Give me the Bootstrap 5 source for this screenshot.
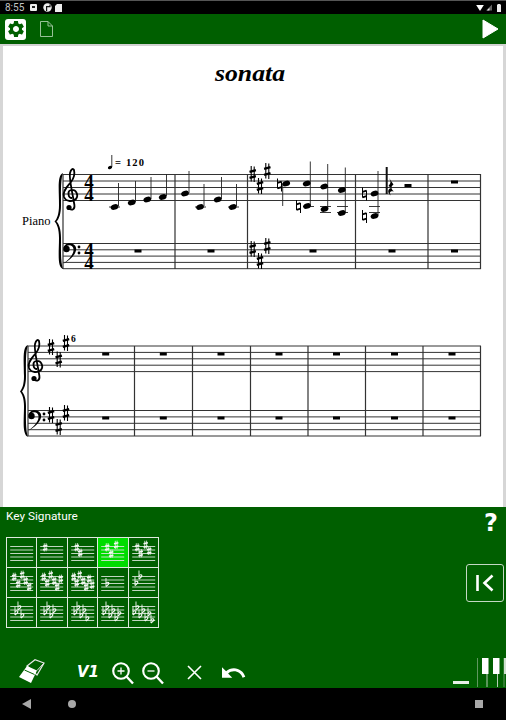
<!DOCTYPE html>
<html lang="en">
<head>
<meta charset="utf-8">
<title>Score editor</title>
<link href="https://cdn.jsdelivr.net/npm/bootstrap@5.3.0/dist/css/bootstrap.min.css" rel="stylesheet">
<style>
html,body{height:720px;overflow:hidden;margin:0;background:#d6d6d6;font-family:Roboto,"Liberation Sans",sans-serif}
.app-shell{width:506px;height:720px}
.sys-bar{height:14px;background:#000;border-top:1px solid #555;color:#c4c4c4;font-size:10px;line-height:13px;padding:0 5px}
.sb-a{margin-left:6px}
.sb-b{margin-left:6px}
.sb-c{margin-left:3px}
.sb-d{margin-left:2px}
.sb-e{margin-left:5px}
.doc-ico{margin-left:14px}
.top-tools{height:30px;background:#005f00;padding:0 7px 0 5px}
.gear-box{width:21px;height:21px;background:#fff;border-radius:3px}
.gray-gap{height:2px;background:#d2d2d2}
.sheet-wrap{height:461px;padding:0 3px;background:#d6d6d6}
.sheet{width:500px;height:461px;background:#fff}
.sheet text{font-family:"Liberation Serif",serif;fill:#000}
.tool-panel{height:181px;background:#005f00;color:#fff;padding:2px 2px 0 6px}
.panel-title{font-size:11.8px;line-height:15px;height:28px}
.key-grid{display:grid;grid-template-columns:repeat(5,29.4px);grid-auto-rows:29px;gap:1px;background:#dfe9df;padding:1px;width:153px}
.key-cell{background:#005f00}
.key-cell svg{display:block;width:100%;height:100%}
.key-on{background:#00dc00}
.side-col{width:38px}
.help-mark{font-family:"DejaVu Sans",sans-serif;font-weight:700;font-size:24px;line-height:28px;padding-left:12px;text-align:center}
.first-btn{width:38px;height:38px;border:1px solid #c4d8c4;border-radius:3px;margin-top:27px}
.voice-tag{font-family:"DejaVu Sans",sans-serif;font-weight:700;font-style:italic;font-size:15px;line-height:16px;width:18px;margin-left:32px;margin-bottom:7px}
.bottom-row{height:36px;margin-top:23px;margin-right:-2px}
.ico-eraser{margin-left:12px;margin-bottom:3px}
.ico-in{margin-left:16.5px;margin-bottom:1px}
.ico-out{margin-left:8px;margin-bottom:1px}
.ico-x{margin-left:23.5px;margin-bottom:7px}
.ico-undo{margin-left:20px;margin-bottom:7px}
.ico-minus{margin-right:8px;margin-bottom:3px}
.nav-strip{height:32px;background:#000;padding-left:22px;padding-right:23px}
.nav-dot{width:8px;height:8px;border-radius:50%;background:#a8a8a8;margin-left:37px}
.nav-sq{width:8px;height:8px;background:#a8a8a8;margin-left:auto}
</style>
</head>
<body>
<div class="app-shell d-flex flex-column">

<div class="sys-bar d-flex align-items-center">
  <span>8:55</span>
  <svg class="sb-a" width="7" height="7" viewBox="0 0 7 7"><rect width="7" height="7" rx="1" fill="#eee"/><rect x="2" y="2" width="3" height="2" fill="#222"/></svg>
  <svg class="sb-b" width="9" height="9" viewBox="0 0 9 9"><circle cx="4.5" cy="4.5" r="4.2" fill="#eee"/><path d="M3.6 8V3.6H7V1.5" fill="none" stroke="#111" stroke-width="1.2"/></svg>
  <svg class="sb-c" width="7" height="8" viewBox="0 0 7 8"><path d="M2 0H7V8H0V2Z" fill="#eee"/></svg>
  <svg class="ms-auto" width="8" height="6" viewBox="0 0 9 7"><path d="M0 0H9L4.5 7Z" fill="#fff"/></svg>
  <svg class="sb-d" width="6" height="7" viewBox="0 0 7 7"><path d="M7 0V7H0Z" fill="#666"/><path d="M4 4V7H1Z" fill="#eee"/></svg>
  <svg class="sb-e" width="4" height="8" viewBox="0 0 4 8"><rect y="0.5" width="4" height="7.5" fill="#eee"/><rect x="1" width="2" height="1" fill="#eee"/></svg>
</div>

<div class="top-tools d-flex align-items-center">
  <div class="gear-box d-flex align-items-center justify-content-center">
    <svg width="20" height="20" viewBox="0 0 24 24"><path fill="#005f00" d="M19.14 12.94c.04-.3.06-.61.06-.94 0-.32-.02-.64-.07-.94l2.03-1.58c.18-.14.23-.41.12-.61l-1.92-3.32c-.12-.22-.37-.29-.59-.22l-2.39.96c-.5-.38-1.03-.7-1.62-.94l-.36-2.54c-.04-.24-.24-.41-.48-.41h-3.84c-.24 0-.43.17-.47.41l-.36 2.54c-.59.24-1.13.57-1.62.94l-2.39-.96c-.22-.08-.47 0-.59.22L2.74 8.87c-.12.21-.08.47.12.61l2.03 1.58c-.05.3-.09.63-.09.94s.02.64.07.94l-2.03 1.58c-.18.14-.23.41-.12.61l1.92 3.32c.12.22.37.29.59.22l2.39-.96c.5.38 1.03.7 1.62.94l.36 2.54c.05.24.24.41.48.41h3.84c.24 0 .44-.17.47-.41l.36-2.54c.59-.24 1.13-.56 1.62-.94l2.39.96c.22.08.47 0 .59-.22l1.92-3.32c.12-.22.07-.47-.12-.61l-2.01-1.58zM12 15.6c-1.98 0-3.6-1.62-3.6-3.6s1.62-3.6 3.6-3.6 3.6 1.62 3.6 3.6-1.62 3.6-3.6 3.6z"/></svg>
  </div>
  <svg class="doc-ico" width="13" height="16" viewBox="0 0 13 16"><path d="M.5.5H8L12.5 5V15.5H.5ZM8 .5V5H12.5" fill="none" stroke="#a8cca8" stroke-width=".9"/></svg>
  <svg class="ms-auto" width="17" height="20" viewBox="0 0 17 20"><path d="M1 1L16 10L1 19Z" fill="#fff" stroke="#fff" stroke-linejoin="round"/></svg>
</div>
<div class="gray-gap"></div>

<div class="sheet-wrap">
<svg class="sheet d-block" viewBox="3 46 500 461">
  <defs>
    <g id="sh" stroke="#000" fill="none">
      <path d="M-1.5 -8V7.5M1.5 -7.5V8" stroke-width="1.1"/>
      <path d="M-3.2 -2.2L3.2 -3.8M-3.2 3.8L3.2 2.2" stroke-width="2.4"/>
    </g>
    <g id="nat" stroke="#000" fill="none">
      <path d="M-2 -6.5V3.5M2 -3.5V6.5" stroke-width="1"/>
      <path d="M-2 -2.2L2 -3.3M-2 3.3L2 2.2" stroke-width="1.8"/>
    </g>
    <ellipse id="hd" rx="4" ry="2.7" transform="rotate(-20)" fill="#000"/>
    <rect id="rs" x="-3.5" y="-1.5" width="7" height="3" fill="#000"/>
    <g id="tre">
      <path d="M1 4C-3 4 -4 -3 0 -4C5 -5 8 1 5 5C2 8 -5 8 -7 3C-9 -3 -3 -8 0 -12C3 -16 4 -20 3 -24C2 -26 0 -25 -1 -21C-2 -17 0 -8 2 3L3.4 11C4 15.5 1 16.5 -1.5 15" fill="none" stroke="#000" stroke-width="1.8"/>
      <circle cx="-2" cy="13.5" r="2.6" fill="#000"/>
    </g>
    <g id="bas" fill="#000">
      <circle cx="-3.5" cy="-1" r="3.2"/>
      <path d="M-6.5 -1C-6.5 -6 -1 -8 3 -6C9 -3 7 6 -7 14C1 8 4 3 3.500 -1C3 -5.500 -3 -6.500 -6.500 -1Z"/>
      <circle cx="9" cy="-3" r="1.4"/><circle cx="9" cy="3" r="1.4"/>
    </g>
    <g id="cl" stroke="#d6e2d6" stroke-width=".9"><path d="M3 8.500H26M3 12H26M3 15.500H26M3 19H26M3 22.500H26"/></g>
    <g id="ss" stroke="#f6f9f6" fill="none"><path d="M-.9 -4.200V4M.9 -4.400V3.800" stroke-width=".8"/><path d="M-2.200 -1.200L2.200 -2.200M-2.200 2.200L2.200 1.200" stroke-width="1.500"/></g>
    <g id="sf" stroke="#f6f9f6" fill="none"><path d="M-1.200 -5.500V3" stroke-width=".9"/><path d="M-1.200 -.4C1 -2.200 2.400 -.6 1.200 .9L-1.200 3" stroke-width="1.100"/></g>
  </defs>

  <text x="250" y="81" font-size="24" font-weight="700" font-style="italic" text-anchor="middle" textLength="70" lengthAdjust="spacingAndGlyphs">sonata</text>
  <text x="22" y="225" font-size="12.5">Piano</text>

  <!-- tempo -->
  <ellipse cx="110" cy="167.500" rx="2.200" ry="1.500" fill="#000" transform="rotate(-20 110 167.500)"/>
  <path d="M111.800 167V155" stroke="#000" stroke-width=".8"/>
  <text x="115" y="166" font-size="10.500" font-weight="700" textLength="29" lengthAdjust="spacing">= 120</text>

  <!-- staves -->
  <g stroke="#333" stroke-width="1" fill="none">
    <path d="M63 174.500H481M63 181H481M63 187.500H481M63 194H481M63 200.500H481"/>
    <path d="M63 243.500H481M63 249.800H481M63 256.100H481M63 262.400H481M63 268.700H481"/>
    <path d="M63 174V269M175 174V269M247.500 174V269M355.500 174V269M428 174V269M480.500 174V269" stroke-width="1.200"/>
    <path d="M28 346H481M28 352.400H481M28 358.800H481M28 365.200H481M28 371.600H481"/>
    <path d="M28 410.500H481M28 416.900H481M28 423.300H481M28 429.700H481M28 436H481"/>
    <path d="M28 346V436M134.500 346V436M192.500 346V436M250.500 346V436M308 346V436M365.500 346V436M423 346V436M480.500 346V436" stroke-width="1.200"/>
  </g>

  <!-- braces -->
  <path fill="#000" d="M63 173C57 175 59 190 59 205C59 214 57 219 54.500 221.500C57 224 59 229 59 238C59 253 57 267 63 269C60.500 262 61 250 61 238C61 229 59 224 56.500 221.500C59 219 61 214 61 205C61 193 60.500 180 63 173Z"/>
  <path fill="#000" d="M28 345C22 347 24 361 24 376C24 385 22 389 20 391.500C22 394 24 398 24 406C24 420 22 434 28 437C25.500 430 26 418 26 406C26 398 24 394 22 391.500C24 389 26 385 26 376C26 362 25.500 352 28 345Z"/>

  <!-- clefs -->
  <use href="#tre" x="71" y="194"/>
  <use href="#bas" x="70" y="250"/>
  <use href="#tre" x="36" y="365"/>
  <use href="#bas" x="35" y="417"/>

  <!-- time signature -->
  <g font-weight="700" font-size="19" text-anchor="middle">
    <text x="89" y="187.500"><tspan>4</tspan><tspan x="89" dy="13">4</tspan></text>
    <text x="89" y="256"><tspan>4</tspan><tspan x="89" dy="13">4</tspan></text>
  </g>

  <!-- key signatures -->
  <use href="#sh" x="252.700" y="174"/><use href="#sh" x="260" y="186"/><use href="#sh" x="267.300" y="171"/>
  <use href="#sh" x="252.700" y="249"/><use href="#sh" x="260" y="261"/><use href="#sh" x="267.300" y="246"/>
  <use href="#sh" x="51" y="347"/><use href="#sh" x="58.700" y="359.500"/><use href="#sh" x="66" y="343"/>
  <use href="#sh" x="51" y="415"/><use href="#sh" x="58.700" y="427"/><use href="#sh" x="66" y="413"/>
  <text x="71" y="342" font-size="9.500" font-weight="700">6</text>

  <!-- ledger lines and stems -->
  <g stroke="#222" stroke-width=".9">
    <path d="M109 207H120M195 207H206M228 207H239M303 206.500H314M320 206.500H331M337 206.500H348M320 212.500H331M337 212.500H348M369 206.500H380M369 212.500H380"/>
    <path d="M118.500 206V183M135.500 202V181M151 199V177M166.500 196V174M189 193V171M204 206V184M221.500 199V177M236.500 206V184"/>
    <path d="M282.700 183.500V206M310.300 206V161.500M327.700 209V164M345.300 212.500V167.500M378 215.500V171"/>
  </g>
  <use href="#hd" x="114.500" y="207"/><use href="#hd" x="131.700" y="202.500"/><use href="#hd" x="147.300" y="199.500"/><use href="#hd" x="162.700" y="197"/>
  <use href="#hd" x="185" y="193.500"/><use href="#hd" x="200" y="207"/><use href="#hd" x="217.700" y="199.500"/><use href="#hd" x="232.700" y="207"/>
  <use href="#hd" x="286.200" y="183.500"/>
  <use href="#hd" x="306.700" y="183.500"/><use href="#hd" x="307" y="206"/>
  <use href="#hd" x="324.200" y="186.500"/><use href="#hd" x="324.500" y="209"/>
  <use href="#hd" x="341.800" y="190"/><use href="#hd" x="341.800" y="213"/>
  <use href="#hd" x="374.500" y="193.500"/><use href="#hd" x="374.500" y="216"/>
  <use href="#nat" x="279.500" y="185"/><use href="#nat" x="298.500" y="206.500"/>
  <use href="#nat" x="364.500" y="194"/><use href="#nat" x="364.500" y="216.500"/>

  <path d="M386.700 167V194" stroke="#111" stroke-width="2"/>
  <path d="M389 178L393.500 184.500C391 186.500 390.500 188.500 394 191.500C390.500 190.500 388.500 192.500 391 195.500C387 193 387.500 188.500 391.500 188L388.500 186C390.500 183.500 391.500 182 389 178Z" fill="#000"/>

  <!-- rests -->
  <use href="#rs" x="408" y="185.500"/><use href="#rs" x="454.500" y="182"/>
  <use href="#rs" x="138" y="251"/><use href="#rs" x="211" y="251"/><use href="#rs" x="313" y="251"/><use href="#rs" x="392" y="251"/><use href="#rs" x="454.500" y="251"/>
  <use href="#rs" x="105.700" y="354"/><use href="#rs" x="163.300" y="354"/><use href="#rs" x="221" y="354"/><use href="#rs" x="279" y="354"/><use href="#rs" x="336.500" y="354"/><use href="#rs" x="394.500" y="354"/><use href="#rs" x="452" y="354"/>
  <use href="#rs" x="105.700" y="418"/><use href="#rs" x="163.300" y="418"/><use href="#rs" x="221" y="418"/><use href="#rs" x="279" y="418"/><use href="#rs" x="336.500" y="418"/><use href="#rs" x="394.500" y="418"/><use href="#rs" x="452" y="418"/>
</svg>
</div>

<div class="tool-panel d-flex flex-column">
  <div class="d-flex">
    <div>
      <div class="panel-title">Key Signature</div>
      <div class="key-grid">
        <div class="key-cell"><svg viewBox="0 0 29 29"><use href="#cl"/></svg></div>
        <div class="key-cell"><svg viewBox="0 0 29 29"><use href="#cl"/><use href="#ss" x="8" y="9.500"/></svg></div>
        <div class="key-cell"><svg viewBox="0 0 29 29"><use href="#cl"/><use href="#ss" x="8.500" y="9.500"/><use href="#ss" x="12" y="15"/></svg></div>
        <div class="key-cell key-on"><svg viewBox="0 0 29 29"><use href="#cl"/><use href="#ss" x="9" y="9.500"/><use href="#ss" x="13" y="16"/><use href="#ss" x="18" y="7"/></svg></div>
        <div class="key-cell"><svg viewBox="0 0 29 29"><use href="#cl"/><use href="#ss" x="8" y="9.500"/><use href="#ss" x="11.500" y="15.500"/><use href="#ss" x="16.500" y="7"/><use href="#ss" x="20" y="13"/></svg></div>

        <div class="key-cell"><svg viewBox="0 0 29 29"><use href="#cl"/><use href="#ss" x="7" y="9"/><use href="#ss" x="11" y="16"/><use href="#ss" x="15" y="7"/><use href="#ss" x="18.500" y="13"/><use href="#ss" x="22" y="19"/></svg></div>
        <div class="key-cell"><svg viewBox="0 0 29 29"><use href="#cl"/><use href="#ss" x="6.500" y="9"/><use href="#ss" x="10" y="15"/><use href="#ss" x="13.500" y="7"/><use href="#ss" x="17" y="13"/><use href="#ss" x="20" y="19"/><use href="#ss" x="23.500" y="11"/></svg></div>
        <div class="key-cell"><svg viewBox="0 0 29 29"><use href="#cl"/><use href="#ss" x="5.500" y="9"/><use href="#ss" x="8.500" y="15"/><use href="#ss" x="11.500" y="7"/><use href="#ss" x="15" y="13"/><use href="#ss" x="18" y="19"/><use href="#ss" x="21" y="11"/><use href="#ss" x="24" y="17"/></svg></div>
        <div class="key-cell"><svg viewBox="0 0 29 29"><use href="#cl"/><use href="#sf" x="9" y="15.500"/></svg></div>
        <div class="key-cell"><svg viewBox="0 0 29 29"><use href="#cl"/><use href="#sf" x="7" y="14.500"/><use href="#sf" x="11" y="8"/></svg></div>

        <div class="key-cell"><svg viewBox="0 0 29 29"><use href="#cl"/><use href="#sf" x="9" y="14"/><use href="#sf" x="12" y="9"/><use href="#sf" x="15" y="17"/></svg></div>
        <div class="key-cell"><svg viewBox="0 0 29 29"><use href="#cl"/><use href="#sf" x="8" y="14"/><use href="#sf" x="11" y="9"/><use href="#sf" x="14" y="17"/><use href="#sf" x="17" y="12"/></svg></div>
        <div class="key-cell"><svg viewBox="0 0 29 29"><use href="#cl"/><use href="#sf" x="7" y="14"/><use href="#sf" x="10" y="9"/><use href="#sf" x="13" y="17"/><use href="#sf" x="16" y="12"/><use href="#sf" x="19" y="20"/></svg></div>
        <div class="key-cell"><svg viewBox="0 0 29 29"><use href="#cl"/><use href="#sf" x="6" y="14"/><use href="#sf" x="9" y="9"/><use href="#sf" x="12" y="17"/><use href="#sf" x="15" y="12"/><use href="#sf" x="18" y="20"/><use href="#sf" x="21" y="15"/></svg></div>
        <div class="key-cell"><svg viewBox="0 0 29 29"><use href="#cl"/><use href="#sf" x="5" y="14"/><use href="#sf" x="8" y="9"/><use href="#sf" x="11" y="17"/><use href="#sf" x="14" y="12"/><use href="#sf" x="17" y="20"/><use href="#sf" x="20" y="15"/><use href="#sf" x="23" y="22"/></svg></div>
      </div>
    </div>
    <div class="side-col ms-auto d-flex flex-column">
      <div class="help-mark">?</div>
      <div class="first-btn d-flex align-items-center justify-content-center">
        <svg width="20" height="18" viewBox="0 0 20 18"><path d="M2.500 1V17" stroke="#fff" stroke-width="2.600"/><path d="M17.500 1.500L9.500 9L17.500 16.500" fill="none" stroke="#fff" stroke-width="2.600"/></svg>
      </div>
    </div>
  </div>

  <div class="bottom-row d-flex align-items-end">
    <svg class="ico-eraser" width="27" height="25" viewBox="0 0 27 25"><path d="M9 7L17 0.700L26 4L19 16Z" fill="#005f00" stroke="#e8e8e8" stroke-width="1.200"/><path d="M9 7L19 11.500L13 24L1 18Z" fill="#fff"/><path d="M6.500 11L16.500 15.500" stroke="#005f00" stroke-width="1"/><path d="M19 11.500L26 4" stroke="#e8e8e8"/></svg>
    <span class="voice-tag">V1</span>
    <svg class="ico-in" width="22" height="24" viewBox="0 0 22 24"><circle cx="9" cy="9" r="7.800" fill="none" stroke="#fff" stroke-width="2.100"/><path d="M14.500 14.500L21 21.500" stroke="#fff" stroke-width="2.400"/><path d="M5.500 9H12.500M9 5.500V12.500" stroke="#fff" stroke-width="1.300"/></svg>
    <svg class="ico-out" width="22" height="24" viewBox="0 0 22 24"><circle cx="9" cy="9" r="7.800" fill="none" stroke="#fff" stroke-width="2.100"/><path d="M14.500 14.500L21 21.500" stroke="#fff" stroke-width="2.400"/><path d="M5.500 9H12.500" stroke="#fff" stroke-width="1.300"/></svg>
    <svg class="ico-x" width="15" height="15" viewBox="0 0 15 15"><path d="M1 1L14 14M14 1L1 14" stroke="#fff" stroke-width="1.600"/></svg>
    <svg class="ico-undo" width="25" height="14" viewBox="2 6 22 12" preserveAspectRatio="none"><path fill="#fff" d="M12.500 8c-2.650 0-5.050.99-6.900 2.600L2 7v9h9l-3.620-3.620c1.390-1.160 3.160-1.880 5.120-1.880 3.540 0 6.550 2.310 7.600 5.500l2.370-.78C21.080 11.030 17.150 8 12.500 8z"/></svg>
    <div class="ms-auto d-flex align-items-end">
      <svg class="ico-minus" width="16" height="3" viewBox="0 0 16 3"><rect width="16" height="3" fill="#e6efe6"/></svg>
      <svg class="d-block" width="29" height="29" viewBox="0 0 29 29"><path d="M.500 0V29M27 0V29" stroke="#5f975f"/><path d="M10 16V29M20.500 16V29" stroke="#b5cdb5"/><rect x="5" width="6.500" height="16" fill="#fff"/><rect x="16" width="6.500" height="16" fill="#fff"/><rect x="27" width="2" height="16" fill="#cfdfcf"/></svg>
    </div>
  </div>
</div>

<div class="nav-strip d-flex align-items-center">
  <svg width="9" height="10" viewBox="0 0 9 10"><path d="M9 0V10L0 5Z" fill="#a8a8a8"/></svg>
  <div class="nav-dot"></div>
  <div class="nav-sq"></div>
</div>
</div>
</body>
</html>
